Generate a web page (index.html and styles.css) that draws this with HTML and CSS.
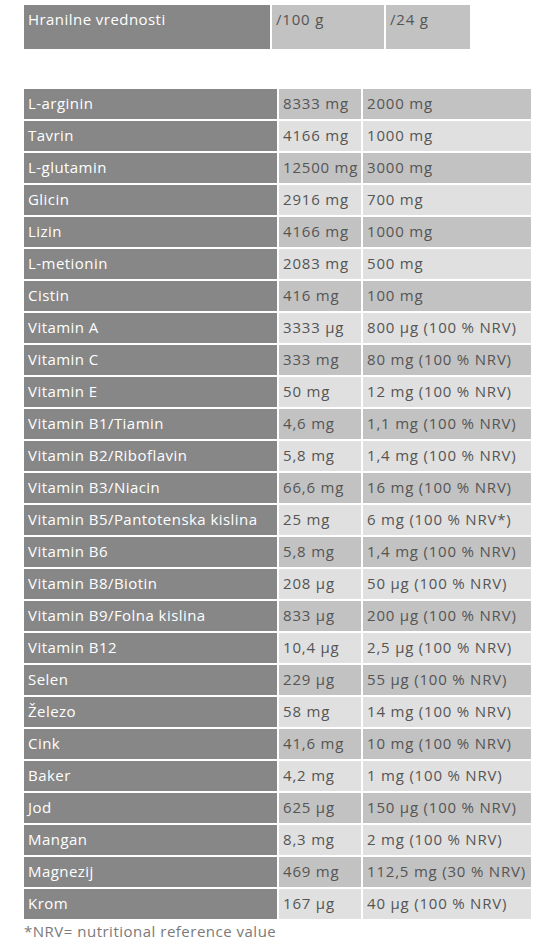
FILE: index.html
```html
<!DOCTYPE html>
<html>
<head>
<meta charset="utf-8">
<link rel="stylesheet" href="styles.css">
</head>
<body>
<div class="head">
  <div class="c dark">Hranilne vrednosti</div>
  <div class="c mid">/100 g</div>
  <div class="c mid">/24 g</div>
</div>
<div class="tbl">
  <div class="c dark">L-arginin</div><div class="c mid">8333 mg</div><div class="c mid">2000 mg</div>
  <div class="c dark">Tavrin</div><div class="c light">4166 mg</div><div class="c light">1000 mg</div>
  <div class="c dark">L-glutamin</div><div class="c mid">12500 mg</div><div class="c mid">3000 mg</div>
  <div class="c dark">Glicin</div><div class="c light">2916 mg</div><div class="c light">700 mg</div>
  <div class="c dark">Lizin</div><div class="c mid">4166 mg</div><div class="c mid">1000 mg</div>
  <div class="c dark">L-metionin</div><div class="c light">2083 mg</div><div class="c light">500 mg</div>
  <div class="c dark">Cistin</div><div class="c mid">416 mg</div><div class="c mid">100 mg</div>
  <div class="c dark">Vitamin A</div><div class="c light">3333 µg</div><div class="c light">800 µg (100 % NRV)</div>
  <div class="c dark">Vitamin C</div><div class="c mid">333 mg</div><div class="c mid">80 mg (100 % NRV)</div>
  <div class="c dark">Vitamin E</div><div class="c light">50 mg</div><div class="c light">12 mg (100 % NRV)</div>
  <div class="c dark">Vitamin B1/Tiamin</div><div class="c mid">4,6 mg</div><div class="c mid">1,1 mg (100 % NRV)</div>
  <div class="c dark">Vitamin B2/Riboflavin</div><div class="c light">5,8 mg</div><div class="c light">1,4 mg (100 % NRV)</div>
  <div class="c dark">Vitamin B3/Niacin</div><div class="c mid">66,6 mg</div><div class="c mid">16 mg (100 % NRV)</div>
  <div class="c dark">Vitamin B5/Pantotenska kislina</div><div class="c light">25 mg</div><div class="c light">6 mg (100 % NRV*)</div>
  <div class="c dark">Vitamin B6</div><div class="c mid">5,8 mg</div><div class="c mid">1,4 mg (100 % NRV)</div>
  <div class="c dark">Vitamin B8/Biotin</div><div class="c light">208 µg</div><div class="c light">50 µg (100 % NRV)</div>
  <div class="c dark">Vitamin B9/Folna kislina</div><div class="c mid">833 µg</div><div class="c mid">200 µg (100 % NRV)</div>
  <div class="c dark">Vitamin B12</div><div class="c light">10,4 µg</div><div class="c light">2,5 µg (100 % NRV)</div>
  <div class="c dark">Selen</div><div class="c mid">229 µg</div><div class="c mid">55 µg (100 % NRV)</div>
  <div class="c dark">Železo</div><div class="c light">58 mg</div><div class="c light">14 mg (100 % NRV)</div>
  <div class="c dark">Cink</div><div class="c mid">41,6 mg</div><div class="c mid">10 mg (100 % NRV)</div>
  <div class="c dark">Baker</div><div class="c light">4,2 mg</div><div class="c light">1 mg (100 % NRV)</div>
  <div class="c dark">Jod</div><div class="c mid">625 µg</div><div class="c mid">150 µg (100 % NRV)</div>
  <div class="c dark">Mangan</div><div class="c light">8,3 mg</div><div class="c light">2 mg (100 % NRV)</div>
  <div class="c dark">Magnezij</div><div class="c mid">469 mg</div><div class="c mid">112,5 mg (30 % NRV)</div>
  <div class="c dark">Krom</div><div class="c light">167 µg</div><div class="c light">40 µg (100 % NRV)</div>
</div>
<p class="note">*NRV= nutritional reference value</p>
</body>
</html>
```
FILE: styles.css
```css
html, body {
  margin: 0;
  padding: 0;
  background: #fff;
}
body {
  font-family: "Open Sans", "DejaVu Sans", sans-serif;
  font-size: 15px;
  color: #555;
}
.head {
  display: grid;
  grid-template-columns: 246px 112px 84px;
  gap: 2px;
  margin: 5px 0 0 24px;
  height: 44px;
}
.tbl {
  display: grid;
  grid-template-columns: 253px 82px 168px;
  grid-auto-rows: 30px;
  gap: 2px;
  margin: 40px 0 0 24px;
}
.c {
  padding: 4px 0 0 4px;
  line-height: 21px;
  white-space: nowrap;
  overflow: hidden;
  letter-spacing: 0.8px;
}
.dark {
  background: #878787;
  color: #fff;
  font-weight: 500;
  letter-spacing: 0.45px;
}
.mid {
  background: #c2c2c2;
}
.light {
  background: #e0e0e0;
}
.note {
  margin: 0 0 0 24px;
  color: #7a7a7a;
  line-height: 24px;
  letter-spacing: 0.5px;
}
```
